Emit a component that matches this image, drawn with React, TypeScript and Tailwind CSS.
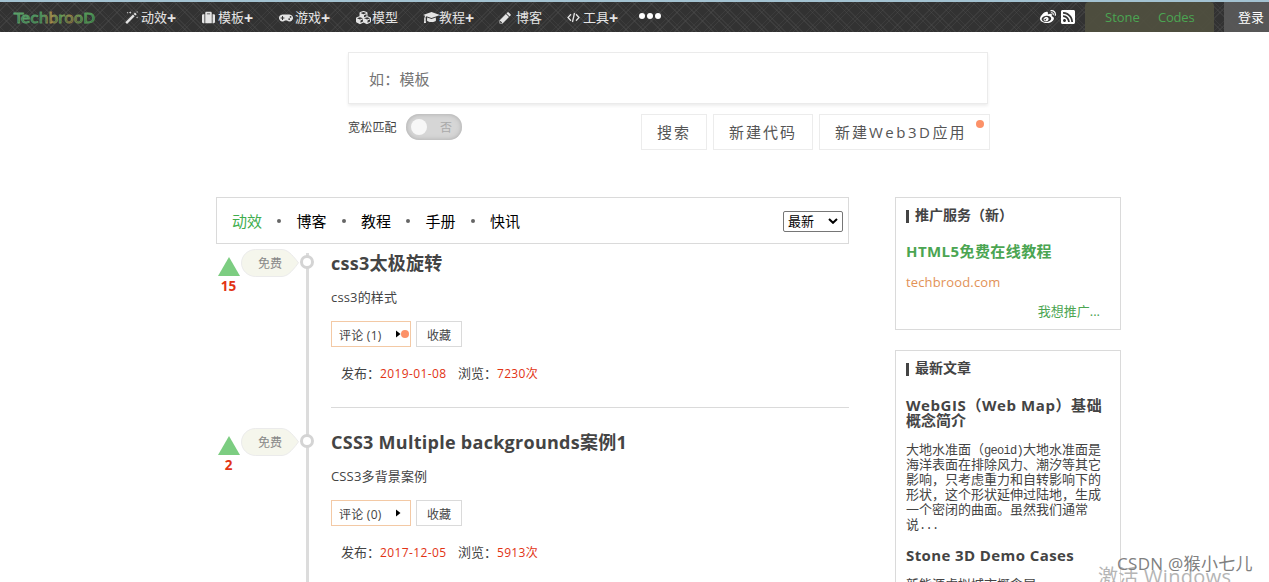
import React from "react";
import { FaSuitcase, FaGamepad, FaCubes, FaWeibo, FaRssSquare } from "react-icons/fa";

function WandIcon() {
  return (
    <svg width="13" height="13" viewBox="0 0 13 13" fill="currentColor">
      <path d="M0.3 11.2L8 3.5l1.7 1.7L2 12.9z" />
      <path d="M8.6 2.9l1.4-1.4 1.7 1.7-1.4 1.4z" />
      <path d="M5.2 0.2l.4 1 1 .4-1 .4-.4 1-.4-1-1-.4 1-.4zM2.6 0.8l.3.7.7.3-.7.3-.3.7-.3-.7-.7-.3.7-.3zM12.1 0l.3.7.6.3-.6.3-.3.7-.3-.7-.7-.3.7-.3zM12.1 5.6l.3.7.6.3-.6.3-.3.7-.3-.7-.7-.3.7-.3z" />
    </svg>
  );
}

function CapIcon() {
  return (
    <svg width="17" height="13" viewBox="0 0 17 13" fill="currentColor" className="shrink-0">
      <path d="M8.5 1L17 4 8.5 7 3.4 5.2C2.7 5.6 2.5 6.5 2.5 7.2c.3.2.4.5.4.8 0 .3-.1.5-.3.7L3 12H.9l.4-3.3C1.1 8.500 1 8.300 1 8c0-.3.2-.6.4-.8 0-.9.200-1.700.700-2.400L0 4z" />
      <path d="M4.200 6.500l4.300 1.600 4.300-1.600.200 2.700c0 1.100-2 1.900-4.500 1.900S4 10.300 4 9.200z" />
    </svg>
  );
}

function PencilIcon() {
  return (
    <svg width="12" height="12" viewBox="0 0 12 12" fill="currentColor">
      <path d="M0.500 11.500V8.400L6.900 2l3.100 3.100-6.400 6.400zM1.500 8.900l1.600 1.600-.6.6H1.800L.9 10.200v-.7z" fillRule="evenodd" />
      <path d="M7.500 1.400L8.400.5c.4-.4 1-.4 1.400 0l1.700 1.700c.4.4.4 1 0 1.400l-.9.9z" />
    </svg>
  );
}

function CodeIcon() {
  return (
    <svg width="13" height="11" viewBox="0 0 13 11" fill="none" stroke="currentColor" strokeWidth="1.300">
      <path d="M4 2.200L1 5.500 4 8.800M9 2.200l3 3.300-3 3.300M7.500 1L5.500 10" />
    </svg>
  );
}

const navItems = [
  { icon: <WandIcon />, label: "动效", plus: true, item: "w-[77px]", box: "w-4" },
  { icon: <FaSuitcase size={13} />, label: "模板", plus: true, item: "w-[77px]", box: "w-4" },
  { icon: <FaGamepad size={14} />, label: "游戏", plus: true, item: "w-[77px]", box: "w-4" },
  { icon: <FaCubes size={15} />, label: "模型", plus: false, item: "w-[67px]", box: "w-4" },
  { icon: <CapIcon />, label: "教程", plus: true, item: "w-[76px]", box: "w-4" },
  { icon: <PencilIcon />, label: "博客", plus: false, item: "w-[68px]", box: "w-[17px]" },
  { icon: <CodeIcon />, label: "工具", plus: true, item: "w-[72px]", box: "w-4" },
];

function Logo() {
  return (
    <svg width="86" height="22" viewBox="0 0 86 22" className="ml-3 block">
      <defs>
        <linearGradient id="logo" x1="0" x2="1" y1="0" y2="0">
          <stop offset="0" stopColor="#5fa86d" />
          <stop offset="0.36" stopColor="#4f9560" />
          <stop offset="0.46" stopColor="#b08a48" />
          <stop offset="0.58" stopColor="#5f9c58" />
          <stop offset="0.7" stopColor="#a08346" />
          <stop offset="0.85" stopColor="#5f9f58" />
          <stop offset="1" stopColor="#489858" />
        </linearGradient>
        <linearGradient id="logoFill" x1="0" x2="0" y1="0" y2="1">
          <stop offset="0.3" stopColor="#4a8558" />
          <stop offset="1" stopColor="#1d3024" />
        </linearGradient>
      </defs>
      <text
        x="2"
        y="16.500"
        textLength="81"
        lengthAdjust="spacingAndGlyphs"
        fontFamily="DejaVu Sans"
        fontSize="14"
        fill="url(#logoFill)"
        stroke="url(#logo)"
        strokeWidth="0.8"
      >
        TechbrooD
      </text>
    </svg>
  );
}

function Header() {
  return (
    <header className="flex h-8 items-stretch border-t-2 border-[#a3c2d1] bg-[#323232] bg-[repeating-linear-gradient(45deg,#50505060_0px,#50505060_1px,transparent_1px,transparent_3px,#50505050_3px,#50505050_4px,transparent_4px,transparent_12px),repeating-linear-gradient(-45deg,#50505060_0px,#50505060_1px,transparent_1px,transparent_3px,#50505050_3px,#50505050_4px,transparent_4px,transparent_12px)] text-[13px] text-[#e4e4e4]">
      <div className="flex w-[125px] items-center">
        <Logo />
      </div>
      <nav className="flex items-center">
        {navItems.map((n) => (
          <a key={n.label} className={"flex items-center pt-px " + n.item}>
            <span className={"flex shrink-0 items-center " + n.box}>{n.icon}</span>
            <span className="pt-px whitespace-nowrap">{n.label}</span>
            {n.plus && <span className="text-[16px] font-bold leading-none">+</span>}
          </a>
        ))}
        <span className="flex gap-[2px] pb-0.5">
          <i className="size-[6px] rounded-full bg-white" />
          <i className="size-[6px] rounded-full bg-white" />
          <i className="size-[6px] rounded-full bg-white" />
        </span>
      </nav>
      <div className="ml-auto flex items-stretch">
        <div className="flex items-center gap-1 pr-[9px] text-white">
          <FaWeibo size={16} />
          <FaRssSquare size={16} />
        </div>
        <div className="flex w-[129px] items-center rounded-t bg-[#50503f]/90 pt-0.5 pl-5 text-[#4ba552]">
          <span className="w-[53px]">Stone</span>
          <span className="tracking-[-0.2px]">Codes</span>
        </div>
        <div className="ml-[10px] flex w-[45px] items-center bg-[#5a5a5a]/90 pt-0.5 pl-[14px] text-[13px] whitespace-nowrap text-white">
          登录
        </div>
      </div>
    </header>
  );
}

function Search() {
  const button =
    "flex h-9 items-center border border-[#ececec] pl-[15px] text-[15px] tracking-[2px] text-[#555] whitespace-nowrap";
  return (
    <section className="ml-[348px] w-[642px] pt-5">
      <div className="flex h-[52px] w-[640px] items-center border border-[#ebebeb] pt-0.5 pl-5 text-[15px] tracking-[0.2px] text-[#757575] shadow-[0_2px_3px_rgba(0,0,0,0.07)]">
        如：模板
      </div>
      <div className="mt-[10px] flex">
        <span className="flex h-[27px] w-[58px] items-center text-[12px] tracking-[0.2px] text-[#444]">宽松匹配</span>
        <span className="flex h-[26px] w-14 items-center rounded-full bg-[#d6d6d6] pl-[5px] text-[12px] text-[#aaa] shadow-[inset_0_0_5px_#a8a8a8]">
          <i className="size-4 rounded-full bg-[#f7f7f7]" />
          <span className="ml-[13px] pt-0.5">否</span>
        </span>
        <div className="ml-auto flex gap-[6px]">
          <div className={button + " w-[66px]"}>搜索</div>
          <div className={button + " w-[100px]"}>新建代码</div>
          <div className={button + " relative w-[171px]"}>
            新建<span className="tracking-[2.5px]">Web3D</span>应用
            <i className="absolute top-[5px] right-[5px] size-2 rounded-full bg-[#fc9168]" />
          </div>
        </div>
      </div>
    </section>
  );
}

function Tabs() {
  const tabs = ["动效", "博客", "教程", "手册", "快讯"];
  return (
    <div className="flex h-[47px] items-center border border-[#dadada] pl-[15px] text-[15px] text-black">
      {tabs.map((t, i) => (
        <React.Fragment key={t}>
          {i > 0 && (
            <span className="flex w-[34.5px] justify-center">
              <i className="size-1 rounded-full bg-[#666]" />
            </span>
          )}
          <span className={i === 0 ? "pt-0.5 text-[#41ad4d]" : "pt-0.5"}>{t}</span>
        </React.Fragment>
      ))}
      <div className="mt-px mr-[5px] ml-auto flex h-[21px] w-[60px] items-center justify-between rounded-[2px] border border-[#767676] px-1 text-[13px]">
        <span className="pt-px">最新</span>
        <svg width="10" height="6" viewBox="0 0 10 6">
          <path d="M1 1l4 3.8L9 1" fill="none" stroke="#000" strokeWidth="2" />
        </svg>
      </div>
    </div>
  );
}

type Post = { votes: string; title: string; desc: string; comments: string; dot: boolean; date: string; views: string };

const posts: Post[] = [
  { votes: "15", title: "css3太极旋转", desc: "css3的样式", comments: "评论 (1)", dot: true, date: "2019-01-08", views: "7230次" },
  { votes: "2", title: "CSS3 Multiple backgrounds案例1", desc: "CSS3多背景案例", comments: "评论 (0)", dot: false, date: "2017-12-05", views: "5913次" },
];

function PostRow({ p, first }: { p: Post; first: boolean }) {
  return (
    <article className="flex h-[179px]">
      <div className="flex w-[25px] flex-col items-center pt-[13px]">
        <svg width="22" height="19" viewBox="0 0 22 19">
          <path d="M11 0L22 19H0z" fill="#7ccd81" />
        </svg>
        <span className="text-[13.5px] leading-5 font-bold text-[#e23314]">{p.votes}</span>
      </div>
      <div className="relative h-[28px] w-[59px] pt-[5px]">
        <svg width="59" height="28" viewBox="0 0 59 28" className="block">
          <path
            d="M14.5 .5H40C46 .5 50 4 57.5 13.8C50 24 46 27.5 40 27.5H14.5C7 27.5 .5 21.5 .5 14S7 .5 14.5 .5z"
            fill="#f5f6ec"
            stroke="#ebebeb"
          />
        </svg>
        <span className="absolute top-[6px] left-[17px] text-[12px] leading-[28px] text-[#888]">免费</span>
      </div>
      <div className="relative flex w-[14px] justify-center self-stretch">
        <i className={first ? "mt-[9px] w-[3px] bg-[#dcdcdc]" : "w-[3px] bg-[#dcdcdc]"} />
        <i className="absolute top-[11px] left-0 size-[14px] rounded-full border-[3px] border-[#d4d4d4] bg-white" />
      </div>
      <div className="ml-[17px] flex flex-1 flex-col">
        <h2 className="mt-[7px] h-6 text-[18px] leading-6 font-bold tracking-[0.27px] whitespace-nowrap text-[#444]">
          {p.title}
        </h2>
        <p className="mt-3 h-5 text-[13px] leading-5 tracking-[0.15px] text-[#444]">{p.desc}</p>
        <div className="mt-[14px] flex h-[26px] gap-[5px] text-[12px] leading-6 text-[#444]">
          <div className="flex w-20 items-center border border-[#f3c9a5] pl-[7px]">
            <span className="w-[57px] pt-[3px] tracking-[0.25px] whitespace-nowrap">{p.comments}</span>
            <svg width="5" height="8" viewBox="0 0 5 8">
              <path d="M0 0.5L4.5 4L0 7.5z" fill="#000" />
            </svg>
            {p.dot && <i className="size-2 shrink-0 rounded-full bg-[#fc9168]" />}
          </div>
          <div className="flex w-[46px] items-center justify-center border border-[#dadada] pt-[3px]">收藏</div>
        </div>
        <div className="mt-4 flex h-5 pl-[10px] text-[13px] leading-5 whitespace-nowrap text-[#444]">
          <span className="w-[39px]">发布：</span>
          <span className="w-[78px] pt-px text-[12px] leading-5 tracking-[0.4px] text-[#e23314]">{p.date}</span>
          <span className="w-[39px]">浏览：</span>
          <span className="pt-px text-[12px] leading-5 tracking-[0.3px] text-[#e23314]">{p.views}</span>
        </div>
        <hr className="mt-[24px] border-[#dadada]" />
      </div>
    </article>
  );
}

function PanelTitle({ children }: { children: React.ReactNode }) {
  return (
    <h3 className="flex h-5 items-center text-[14px] leading-5 font-bold text-[#444]">
      <i className="mt-0.5 mr-[6px] h-[13px] w-[3px] bg-[#444]" />
      {children}
    </h3>
  );
}

function Sidebar() {
  return (
    <aside className="ml-[46px] w-[226px] text-[#444]">
      <section className="h-[133px] border border-[#dadada] px-[10px] pt-[7px]">
        <PanelTitle>推广服务（新）</PanelTitle>
        <h4 className="mt-4 text-[15px] leading-5 font-bold tracking-[0.42px] whitespace-nowrap text-[#4ba552]">
          HTML5免费在线教程
        </h4>
        <p className="mt-[11px] text-[13px] leading-5 tracking-[0.15px] text-[#e29257]">techbrood.com</p>
        <p className="mt-[9px] pr-[10px] text-right text-[13px] leading-5 text-[#4ba552]">我想推广...</p>
      </section>
      <section className="mt-5 border border-[#dadada] px-[10px] pt-[7px] pb-10">
        <PanelTitle>最新文章</PanelTitle>
        <h4 className="mt-[20px] text-[15px] leading-[15px] font-bold whitespace-nowrap">
          <span className="tracking-[0.58px]">WebGIS（Web Map）基础</span>
          <br />
          概念简介
        </h4>
        <p className="mt-[14px] text-[13px] leading-[15px] whitespace-nowrap">
          大地水准面（
          <span className="font-['Liberation_Mono'] text-[12px] leading-[0] tracking-[-0.7px]">geoid)</span>
          大地水准面是
          <br />
          海洋表面在排除风力、潮汐等其它
          <br />
          影响，只考虑重力和自转影响下的
          <br />
          形状，这个形状延伸过陆地，生成
          <br />
          一个密闭的曲面。虽然我们通常
          <br />
          说<span className="font-['Liberation_Mono'] text-[12px] leading-[0] tracking-[-0.7px]">...</span>
        </p>
        <h4 className="mt-[16px] text-[15px] leading-[15px] font-bold tracking-[0.4px] whitespace-nowrap">
          Stone 3D Demo Cases
        </h4>
        <p className="mt-[14px] text-[13px] leading-[15px]">新能源虚拟城市概念展</p>
      </section>
    </aside>
  );
}

export default function App() {
  return (
    <div className="relative h-[582px] w-[1269px] overflow-hidden bg-white font-['Open_Sans','Noto_Sans_CJK_SC',sans-serif]">
      <Header />
      <Search />
      <main className="mt-[47px] ml-[216px] flex items-start">
        <div className="w-[633px]">
          <Tabs />
          {posts.map((p, i) => (
            <PostRow key={p.votes} p={p} first={i === 0} />
          ))}
        </div>
        <Sidebar />
      </main>
      <div className="absolute top-[562px] left-[1098px] text-[20px] leading-[30px] tracking-[0.3px] whitespace-nowrap text-[#b5b5b5]">
        激活 Windows
      </div>
      <div className="absolute top-[552px] left-[1117px] text-[17px] leading-6 tracking-[0.3px] whitespace-nowrap text-[#808080]">
        CSDN @猴小七儿
      </div>
    </div>
  );
}
